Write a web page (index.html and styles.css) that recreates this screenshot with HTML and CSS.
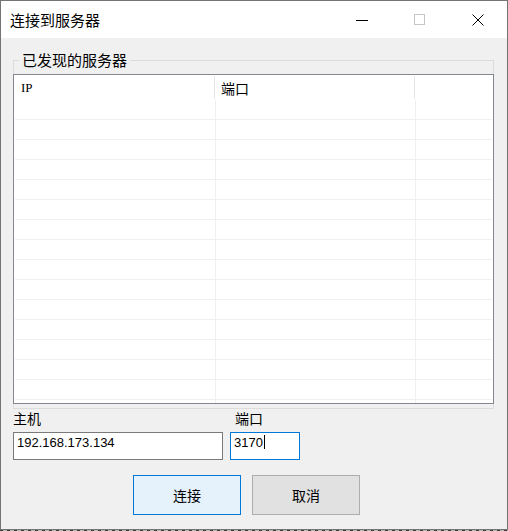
FILE: index.html
```html
<!DOCTYPE html>
<html lang="zh-CN">
<head>
    <meta charset="UTF-8">
    <title>连接到服务器</title>
    <link rel="stylesheet" href="styles.css">
</head>
<body>
<div class="window">
    <!-- 标题栏 -->
    <div class="title-bar">
        <div class="title">连接到服务器</div>
        <div class="caption-btns">
            <div class="cap-btn">
                <svg width="12" height="12" viewBox="0 0 12 12"><path d="M0 6.5H12" stroke="#000" stroke-width="1"/></svg>
            </div>
            <div class="cap-btn">
                <svg width="12" height="12" viewBox="0 0 12 12"><rect x="0.5" y="0.5" width="10" height="10" fill="none" stroke="#c6c6c6" stroke-width="1"/></svg>
            </div>
            <div class="cap-btn">
                <svg width="12" height="12" viewBox="0 0 12 12"><path d="M0.5 0.5L11.5 11.5M11.5 0.5L0.5 11.5" stroke="#000" stroke-width="1"/></svg>
            </div>
        </div>
    </div>

    <!-- 内容区 -->
    <div class="client">
        <fieldset class="group">
            <legend>已发现的服务器</legend>
            <div class="listview">
                <div class="lv-header">
                    <div class="lv-head-cell col-ip">IP</div>
                    <div class="lv-head-cell col-port">端口</div>
                    <div class="lv-head-cell col-rest"></div>
                </div>
                <div class="lv-body" id="lvBody"></div>
            </div>
        </fieldset>

        <div class="fields">
            <div class="field host">
                <div class="field-label">主机</div>
                <div class="textbox">192.168.173.134</div>
            </div>
            <div class="field port">
                <div class="field-label">端口</div>
                <div class="textbox focused">3170<span class="caret"></span></div>
            </div>
        </div>

        <div class="buttons">
            <button class="btn default">连接</button>
            <button class="btn">取消</button>
        </div>
    </div>
</div>
<div class="backdrop"></div>

<script>
    // 生成列表的空行
    const body = document.getElementById('lvBody');
    for (let i = 0; i < 16; i++) {
        const row = document.createElement('div');
        row.className = 'lv-row';
        row.innerHTML = '<div class="lv-cell"></div><div class="lv-cell"></div><div class="lv-cell"></div>';
        body.appendChild(row);
    }
</script>
</body>
</html>
```

FILE: styles.css
```css
* {
    margin: 0;
    padding: 0;
    box-sizing: border-box;
}

body {
    font-family: "Liberation Sans", "Noto Sans CJK SC", sans-serif;
    background: #f0f0f0;
    width: 508px;
    height: 531px;
    overflow: hidden;
    color: #000;
}

.window {
    width: 508px;
    height: 530px;
    border: 1px solid #747474;
    background: #f0f0f0;
    display: flex;
    flex-direction: column;
}

/* 标题栏 */
.title-bar {
    height: 37px;
    background: #fff;
    display: flex;
    justify-content: space-between;
    align-items: center;
    padding-left: 9px;
}

.title {
    font-family: "Noto Sans CJK SC", sans-serif;
    font-size: 15px;
    line-height: 20px;
}

.caption-btns {
    display: flex;
    height: 100%;
}

.cap-btn {
    width: 58px;
    height: 100%;
    display: flex;
    align-items: center;
    justify-content: center;
}

.cap-btn svg {
    display: block;
}

/* 主内容区 */
.client {
    flex: 1;
    padding: 14px 13px 0 12px;
}

.group {
    border: 1px solid #dcdcdc;
    padding: 6px 0 4px 0;
    min-width: 0;
}

.group legend {
    font-family: "Noto Sans CJK SC", sans-serif;
    font-size: 15px;
    line-height: 16px;
    margin-left: 5px;
    padding: 0 3px;
}

.listview {
    margin: 0 -1px;
    height: 330px;
    border: 1px solid #828790;
    background: #fff;
    display: flex;
    flex-direction: column;
    overflow: hidden;
}

.lv-header {
    height: 25px;
    display: flex;
    flex-shrink: 0;
}

.lv-head-cell {
    margin: 1px 0;
    display: flex;
    align-items: center;
    padding-left: 7px;
    font-family: "Liberation Serif", "Noto Sans CJK SC", serif;
    font-size: 13px;
}

.lv-head-cell.col-port {
    font-family: "Noto Sans CJK SC", sans-serif;
    font-size: 14px;
    padding-left: 6px;
}

.col-ip {
    width: 201px;
    border-right: 1px solid #e5e5e5;
}

.col-port {
    width: 200px;
    border-right: 1px solid #e5e5e5;
}

.col-rest {
    flex: 1;
}

.lv-body {
    flex: 1;
    overflow: hidden;
    padding: 0 1px;
}

.lv-row {
    height: 20px;
    display: grid;
    grid-template-columns: 201px 200px 1fr;
    border-bottom: 1px solid #f0f0f0;
}

.lv-cell:nth-child(-n+2) {
    border-right: 1px solid #f0f0f0;
}

/* 主机和端口 */
.fields {
    display: flex;
    gap: 7px;
}

.field-label {
    font-family: "Noto Sans CJK SC", sans-serif;
    font-size: 14px;
    line-height: 18px;
    margin-bottom: 5px;
}

.port .field-label {
    padding-left: 5px;
}

.textbox {
    height: 28px;
    border: 1px solid #7a7a7a;
    background: #fff;
    padding: 2px 3px;
    font-size: 13px;
    line-height: 16px;
    white-space: nowrap;
}

.host .textbox {
    width: 210px;
}

.port .textbox {
    width: 70px;
}

.textbox.focused {
    border-color: #0078d7;
}

.caret {
    display: inline-block;
    width: 1px;
    height: 14px;
    background: #000;
    vertical-align: -2px;
    margin-left: 1px;
}

/* 按钮 */
.buttons {
    display: flex;
    gap: 11px;
    margin: 15px 0 0 120px;
}

.btn {
    width: 108px;
    height: 40px;
    border: 1px solid #adadad;
    background: #e1e1e1;
    font-family: "Noto Sans CJK SC", sans-serif;
    font-size: 14px;
    color: #000;
}

.btn.default {
    border-color: #0078d7;
    background: #e5f1fb;
}

.backdrop {
    height: 1px;
    background: repeating-linear-gradient(90deg, #3c3c3c 0 3px, #b8b8b8 3px 7px);
}
```
